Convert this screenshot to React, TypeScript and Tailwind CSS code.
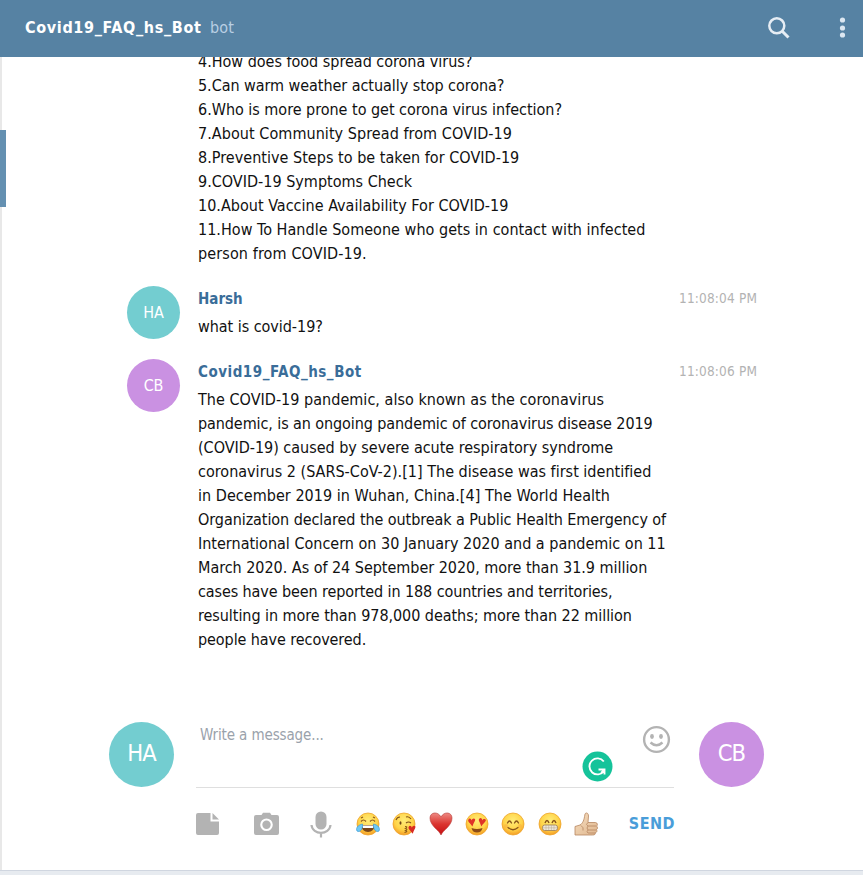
import type { ReactNode } from "react";

const font =
  "font-['Tahoma','DejaVu_Sans_Condensed','DejaVu_Sans','Noto_Sans',sans-serif] [font-stretch:condensed]";

type Line = [text: string, tracking: string];

const questions: Line[] = [
  ["4.How does food spread corona virus?", "tracking-[-0.01px]"],
  ["5.Can warm weather actually stop corona?", "tracking-[-0.05px]"],
  ["6.Who is more prone to get corona virus infection?", "tracking-[-0.02px]"],
  ["7.About Community Spread from COVID-19", "tracking-[0.06px]"],
  ["8.Preventive Steps to be taken for COVID-19", "tracking-[0.03px]"],
  ["9.COVID-19 Symptoms Check", "tracking-[0.01px]"],
  ["10.About Vaccine Availability For COVID-19", "tracking-[0.02px]"],
  ["11.How To Handle Someone who gets in contact with infected", "tracking-[0.03px]"],
  ["person from COVID-19.", "tracking-[0.12px]"],
];

const answer: Line[] = [
  ["The COVID-19 pandemic, also known as the coronavirus", "tracking-[0.03px]"],
  ["pandemic, is an ongoing pandemic of coronavirus disease 2019", "tracking-[-0.09px]"],
  ["(COVID-19) caused by severe acute respiratory syndrome", "tracking-[-0.02px]"],
  ["coronavirus 2 (SARS-CoV-2).[1] The disease was first identified", "tracking-[0.01px]"],
  ["in December 2019 in Wuhan, China.[4] The World Health", "tracking-[0.04px]"],
  ["Organization declared the outbreak a Public Health Emergency of", "tracking-[-0.07px]"],
  ["International Concern on 30 January 2020 and a pandemic on 11", "tracking-[0px]"],
  ["March 2020. As of 24 September 2020, more than 31.9 million", "tracking-[-0.03px]"],
  ["cases have been reported in 188 countries and territories,", "tracking-[-0.1px]"],
  ["resulting in more than 978,000 deaths; more than 22 million", "tracking-[-0.05px]"],
  ["people have recovered.", "tracking-[-0.08px]"],
];

function Lines({ lines }: { lines: Line[] }) {
  return (
    <div className="text-[16px] leading-6 whitespace-nowrap text-[#111]">
      {lines.map(([text, tracking]) => (
        <p key={text} className={tracking}>{text}</p>
      ))}
    </div>
  );
}

interface MessageProps {
  initials: string;
  color: string;
  name: string;
  nameTracking: string;
  time: string;
  lines: Line[];
}

function Message({ initials, color, name, nameTracking, time, lines }: MessageProps) {
  return (
    <article className="flex pl-[127px]">
      <div className={`flex size-[53px] shrink-0 items-center justify-center rounded-full text-[16px] tracking-[-0.1px] text-white ${color}`}>
        {initials}
      </div>
      <div className="ml-[18px] w-[481px] shrink-0">
        <h2 className={`pt-px pb-[3px] text-[15px] leading-[25px] font-bold text-[#3a6d99] ${nameTracking}`}>{name}</h2>
        <Lines lines={lines} />
      </div>
      <time className="pt-[2px] text-[13.5px] leading-5 tracking-[0.17px] whitespace-nowrap text-[#b3b3b3]">{time}</time>
    </article>
  );
}

function Face({ children }: { children: ReactNode }) {
  return (
    <svg className="size-6 shrink-0" viewBox="0 0 24 24" fill="none">
      <circle cx="12" cy="12" r="11" fill="url(#face)" stroke="#eda52d" strokeWidth=".8" />
      {children}
    </svg>
  );
}

const heart = "M0 5C-2-1-7-4-5-7-3-10 0-8 0-5 1-8 5-9 6-6 6-3 2 0 0 5Z";

function Emojis() {
  return (
    <div className="flex w-[242px] items-center justify-between">
      <svg className="absolute size-0">
        <defs>
          <radialGradient id="face" cx=".5" cy=".35" r=".65">
            <stop stopColor="#ffec78" />
            <stop offset=".65" stopColor="#ffd347" />
            <stop offset="1" stopColor="#f49b25" />
          </radialGradient>
          <linearGradient id="red" x1="0" y1="0" x2="0" y2="1">
            <stop stopColor="#ee8b84" />
            <stop offset=".5" stopColor="#db3530" />
            <stop offset="1" stopColor="#c60e12" />
          </linearGradient>
          <linearGradient id="skin" x1="0" y1="0" x2="1" y2="1">
            <stop stopColor="#f7dfc1" />
            <stop offset="1" stopColor="#dfb68e" />
          </linearGradient>
        </defs>
      </svg>
      <Face>
        <path d="M5 9.500q2.500-3 5 0M14 9.500q2.500-3 5 0M5 6l2-1M17 5l2 1" stroke="#8b591d" strokeWidth="1.2" />
        <path d="M5 13h14q-1 7-7 7T5 13Z" fill="#794518" />
        <path d="M6 13.500h12l-1 2.500H7Z" fill="#fff" />
        <path d="M6.500 12C2 13-.5 16 1 19c3 2 6-2 5.500-7ZM17.500 12c4.500 1 7 4 5.500 7-3 2-6-2-5.500-7Z" fill="#70c9f4" stroke="#3b9cda" strokeWidth=".7" />
      </Face>
      <Face>
        <path d="M4 8q1-3 4-3M14 5q3-1 5 2M14 11q2.500-2 5 0" stroke="#815019" strokeWidth="1.1" />
        <ellipse cx="8.500" cy="11" rx="1" ry="1.700" fill="#704416" />
        <path d="M13 14.500q3.500 0 .5 2 3 .5 0 2 3 1-1 2" stroke="#8e5a19" strokeWidth="1.1" />
        <path d={heart} transform="translate(20.300 18.800) rotate(-8) scale(.62)" fill="#d82b23" />
      </Face>
      <svg className="size-6 shrink-0" viewBox="0 0 24 24">
        <path d="M12 23C10 18 1 14 1 6 1 0 9-1 12 5c3-6 11-5 11 1 0 8-9 12-11 17Z" fill="url(#red)" stroke="#b63a38" strokeWidth=".6" />
      </svg>
      <Face>
        <path d={heart} transform="translate(7 11.500) rotate(-8) scale(.62)" fill="#df3328" />
        <path d={heart} transform="translate(16.700 11.500) rotate(8) scale(.62)" fill="#df3328" />
        <path d="M6.500 16q5.500 2 11 0-1 4.500-5.500 4.500T6.500 16Z" fill="#8b4b16" />
      </Face>
      <Face>
        <path d="M6.500 11q2-4 4 0M13.500 11q2-4 4 0M7 15.500q5 4.500 10 0" stroke="#8a551b" strokeWidth="1.3" strokeLinecap="round" />
        <circle cx="5" cy="14" r="2" fill="#f7a13b" opacity=".4" />
        <circle cx="19" cy="14" r="2" fill="#f7a13b" opacity=".4" />
      </Face>
      <Face>
        <path d="M7 11q2-5 4 0M14 11q2-5 4 0" stroke="#865119" strokeWidth="1.4" />
        <rect x="4.500" y="13" width="15" height="5.500" rx="2.200" fill="#eee9dc" stroke="#a1835a" strokeWidth=".9" />
        <path d="M5 15.800h14M8 13v5M10.700 13v5M13.400 13v5M16 13v5" stroke="#b9a68a" strokeWidth=".5" />
      </Face>
      <svg className="size-6 shrink-0" viewBox="0 0 24 24">
        <path d="M1 14.500l5-1.500c3-2 4-4.500 5-11 1-2 3.500-1 3.500 2l-.5 6.500h7.500c2 0 2.500 3 1 3.500 1.500 1 1 3.500 0 3.500 1 2 0 3-1 3 0 2-1 2.500-3 2.500H9L1 23Z" fill="url(#skin)" stroke="#b68661" strokeWidth=".8" />
        <path d="M14 10.500q-3 2 0 3.500h8M14 14q-2 2 0 4h8M14 18q-2 2 0 3h7M7 13.500q3 2 2 5" fill="none" stroke="#b68661" strokeWidth=".8" />
      </svg>
    </div>
  );
}

function ComposerAvatar({ children, color }: { children: string; color: string }) {
  return (
    <div className={`flex size-[65px] shrink-0 items-center justify-center rounded-full pb-px text-[23.5px] tracking-[-0.9px] text-white ${color}`}>
      {children}
    </div>
  );
}

export default function App() {
  return (
    <div className={`relative flex h-[875px] w-[863px] flex-col overflow-hidden bg-white ${font}`}>
      <header className="z-10 flex h-[57px] shrink-0 items-center bg-[#5682a3] pl-[25px]">
        <h1 className="w-[185px] pb-[2px] text-[16px] font-bold tracking-[0.66px] whitespace-nowrap text-white">Covid19_FAQ_hs_Bot</h1>
        <span className="pb-[2px] text-[16px] tracking-[0.1px] text-[#b9cfe3]">bot</span>
        <svg className="mr-[47px] mb-0.5 ml-auto size-6" viewBox="0 0 24 24" fill="none" stroke="#e6edf4" strokeWidth="2.5">
          <circle cx="9.800" cy="9.800" r="7.500" />
          <path d="m15 15 6.500 6.500" strokeWidth="3" />
        </svg>
        <svg className="mr-[17px] h-6 w-2" viewBox="0 0 8 24" fill="#dce7f1">
          <circle cx="4.500" cy="3" r="2.600" />
          <circle cx="4.500" cy="11" r="2.600" />
          <circle cx="4.500" cy="18" r="2.600" />
        </svg>
      </header>

      <main className="flex h-[813px] flex-col border-l-2 border-[#e8e8e8]">
        <div className="-ml-0.5 flex flex-col">
          <div className="-mt-[7px] pl-[198px]"><Lines lines={questions} /></div>
          <div className="mt-5 flex flex-col gap-5">
            <Message
              initials="HA"
              color="bg-[#73cdd0]"
              name="Harsh"
              nameTracking="tracking-[0px]"
              time="11:08:04 PM"
              lines={[["what is covid-19?", "tracking-[-0.04px]"]]}
            />
            <Message
              initials="CB"
              color="bg-[#ca91e2]"
              name="Covid19_FAQ_hs_Bot"
              nameTracking="tracking-[0.52px]"
              time="11:08:06 PM"
              lines={answer}
            />
          </div>
          <section className="mt-[70px] flex pl-[109px]">
            <ComposerAvatar color="bg-[#73cdd0]">HA</ComposerAvatar>
            <div className="ml-[22px] w-[478px] shrink-0">
              <div className="flex h-[66px] justify-end border-b border-[#dfdfdf]">
                <p className="mr-auto ml-1 pt-[3px] text-[15px] leading-5 tracking-[-0.12px] text-[#9aa2ab]">Write a message...</p>
                <svg className="mt-[29px] mr-[29px] size-[31px]" viewBox="0 0 31 31" fill="none">
                  <circle cx="15.500" cy="15.500" r="15" fill="#15c39a" />
                  <path d="M21.800 10.500a8 8 0 1 0 .2 9.500M16.500 18.500h6v5M22.500 18.500l-3.500 3.500" stroke="#fff" strokeWidth="1.900" />
                </svg>
                <svg className="mt-[3px] mr-[3px] size-[29px]" viewBox="0 0 29 29" fill="none" stroke="#b3b3b3" strokeWidth="2.400">
                  <circle cx="14.500" cy="14.500" r="12.400" />
                  <path d="M8.500 17.500q6 5.500 12 0" />
                  <ellipse cx="10" cy="11.500" rx="1.900" ry="2.400" fill="#b3b3b3" stroke="none" />
                  <ellipse cx="19" cy="11.500" rx="1.900" ry="2.400" fill="#b3b3b3" stroke="none" />
                </svg>
              </div>
              <div className="mt-[22px] flex h-7 items-center">
                <svg className="h-[22px] w-[23px]" viewBox="0 0 23 22" fill="#b3b3b3">
                  <path d="M2 0h12.500v8.500H23V20q0 2-2 2H2q-2 0-2-2V2Q0 0 2 0ZM16.500 0v6.500H23Z" />
                </svg>
                <svg className="ml-[35px] h-6 w-[25px]" viewBox="0 0 25 24" fill="#b3b3b3">
                  <path fillRule="evenodd" d="M7.500 3 9 .8h7L17.500 3H23q2 0 2 2v16q0 2-2 2H2q-2 0-2-2V5q0-2 2-2Zm5 3.500a6.300 6.300 0 1 0 0 12.600 6.300 6.300 0 0 0 0-12.600Z" />
                  <circle cx="12.500" cy="12.800" r="4.200" />
                </svg>
                <svg className="ml-[31px] h-[27px] w-[22px]" viewBox="0 0 22 27" fill="none" stroke="#b3b3b3" strokeWidth="2.200">
                  <rect x="5.500" y=".5" width="11" height="18" rx="5.500" fill="#b3b3b3" stroke="none" />
                  <path d="M1.500 14c1 10.500 18 10.500 19 0M11 22v4.500" />
                </svg>
                <div className="ml-[24px]"><Emojis /></div>
                <button className="-mr-px ml-auto text-[16px] font-bold tracking-[0.5px] text-[#499dd9]">SEND</button>
              </div>
            </div>
            <div className="ml-[25px]"><ComposerAvatar color="bg-[#ca91e2]">CB</ComposerAvatar></div>
          </section>
        </div>
      </main>
      <footer className="h-[5px] border-t border-[#d0d6e0] bg-[#e7ebf0]" />
      <div className="absolute top-[130px] left-0 h-[77px] w-1.5 bg-[#6490b1]" />
    </div>
  );
}
